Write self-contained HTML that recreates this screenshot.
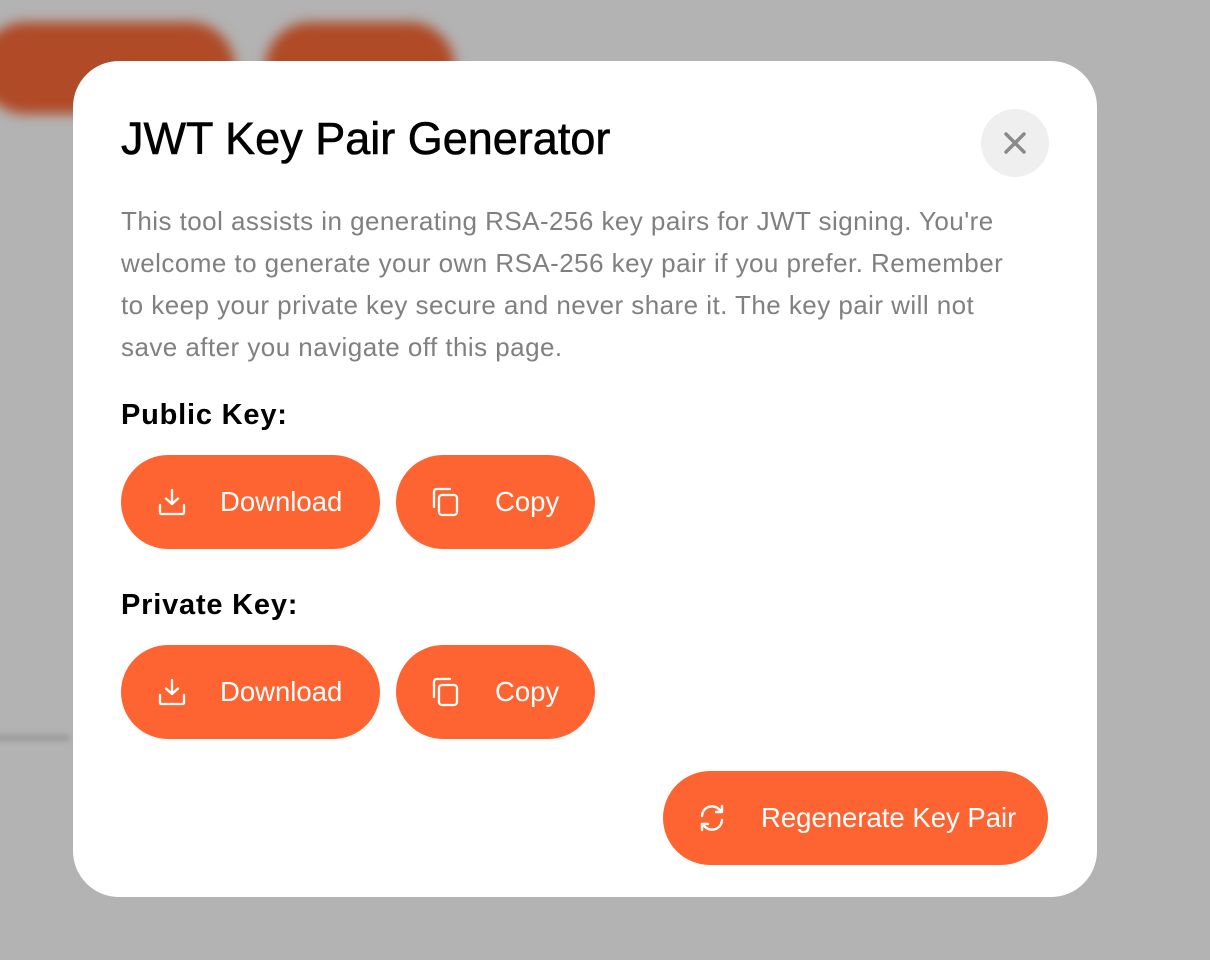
<!DOCTYPE html>
<html><head><style>
*{margin:0;padding:0;box-sizing:border-box}
body{width:1210px;height:960px;background:#b3b3b3;position:relative;overflow:hidden;font-family:"Liberation Sans",sans-serif}
.bg{position:absolute;background:#b04a27;border-radius:60px;filter:blur(6px)}
.modal{position:absolute;left:73px;top:61px;width:1024px;height:836px;background:#fff;border-radius:46px}
h1{position:absolute;left:48px;top:52px;font-size:45px;font-weight:400;letter-spacing:0;color:#000;-webkit-text-stroke:0.6px #000}
.close{position:absolute;left:908px;top:48px;width:68px;height:68px;border-radius:50%;background:#efefef}
p{position:absolute;left:48px;top:139px;width:912px;font-size:26px;letter-spacing:0.45px;line-height:42px;color:#808080}
.lbl{position:absolute;left:48px;font-size:29px;letter-spacing:0.8px;font-weight:700;color:#000}
.btn{position:absolute;height:94px;border-radius:47px;background:#fe6431;color:#fff;font-size:27.5px;display:flex;align-items:center}
.btn svg{position:absolute}
.btn span{position:absolute}
</style></head><body>
<div class="bg" style="left:-20px;top:22px;width:255px;height:92px"></div>
<div class="bg" style="left:265px;top:22px;width:190px;height:92px"></div>
<div class="bg" style="left:-10px;top:735px;width:80px;height:6px;background:#999;filter:blur(3px)"></div>
<div class="modal">
<h1>JWT Key Pair Generator</h1>
<div class="close"><svg width="68" height="68" viewBox="0 0 68 68"><path d="M25 25L43 43M43 25L25 43" stroke="#8a8a8a" stroke-width="3.5" stroke-linecap="round"/></svg></div>
<p>This tool assists in generating RSA-256 key pairs for JWT signing. You're welcome to generate your own RSA-256 key pair if you prefer. Remember to keep your private key secure and never share it. The key pair will not save after you navigate off this page.</p>
<div class="lbl" style="top:338px">Public Key:</div>
<div class="lbl" style="top:528px">Private Key:</div>

<div class="btn" style="left:48px;top:394px;width:259px"><svg style="left:36px;top:32px" width="30" height="30" viewBox="0 0 30 30" fill="none" stroke="#fff" stroke-width="2.3" stroke-linecap="round" stroke-linejoin="round"><path d="M15 3V17M9 11.5L15 17L21 11.5M3 18V25.5Q3 27 4.5 27H25.5Q27 27 27 25.5V18"/></svg><span style="left:99px">Download</span></div>
<div class="btn" style="left:323px;top:394px;width:199px"><svg style="left:33px;top:31px" width="32" height="32" viewBox="0 0 32 32" fill="none" stroke="#fff" stroke-width="2.3" stroke-linecap="round" stroke-linejoin="round"><rect x="10" y="9" width="18" height="20" rx="3"/><path d="M5 21V6Q5 3 8 3H21"/></svg><span style="left:99px">Copy</span></div>

<div class="btn" style="left:48px;top:584px;width:259px"><svg style="left:36px;top:32px" width="30" height="30" viewBox="0 0 30 30" fill="none" stroke="#fff" stroke-width="2.3" stroke-linecap="round" stroke-linejoin="round"><path d="M15 3V17M9 11.5L15 17L21 11.5M3 18V25.5Q3 27 4.5 27H25.5Q27 27 27 25.5V18"/></svg><span style="left:99px">Download</span></div>
<div class="btn" style="left:323px;top:584px;width:199px"><svg style="left:33px;top:31px" width="32" height="32" viewBox="0 0 32 32" fill="none" stroke="#fff" stroke-width="2.3" stroke-linecap="round" stroke-linejoin="round"><rect x="10" y="9" width="18" height="20" rx="3"/><path d="M5 21V6Q5 3 8 3H21"/></svg><span style="left:99px">Copy</span></div>

<div class="btn" style="left:590px;top:710px;width:385px"><svg style="left:34px;top:32px" width="30" height="30" viewBox="0 0 30 30" fill="none" stroke="#fff" stroke-width="2.4" stroke-linecap="round" stroke-linejoin="round"><path d="M5 13A10 10 0 0 1 24 9M25 3V9H19M25 17A10 10 0 0 1 6 21M5 27V21H11"/></svg><span style="left:98px">Regenerate Key Pair</span></div>
</div>
</body></html>
